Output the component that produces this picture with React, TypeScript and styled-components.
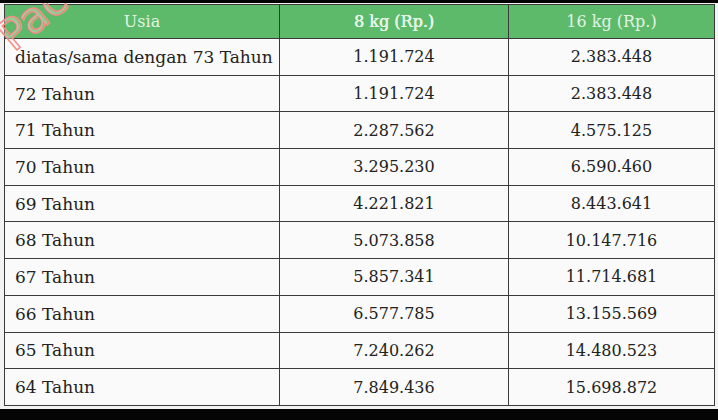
import React from "react";
import styled, { createGlobalStyle } from "styled-components";

const rows: [string, string, string][] = [
  ["diatas/sama dengan 73 Tahun", "1.191.724", "2.383.448"],
  ["72 Tahun", "1.191.724", "2.383.448"],
  ["71 Tahun", "2.287.562", "4.575.125"],
  ["70 Tahun", "3.295.230", "6.590.460"],
  ["69 Tahun", "4.221.821", "8.443.641"],
  ["68 Tahun", "5.073.858", "10.147.716"],
  ["67 Tahun", "5.857.341", "11.714.681"],
  ["66 Tahun", "6.577.785", "13.155.569"],
  ["65 Tahun", "7.240.262", "14.480.523"],
  ["64 Tahun", "7.849.436", "15.698.872"],
];

const GlobalStyle = createGlobalStyle`
  html, body {
    margin: 0;
    padding: 0;
    background: #f2f2f2;
  }
  body {
    font-family: "DejaVu Serif", "Liberation Serif", serif;
  }
`;

export default function App() {
  return (
    <>
      <GlobalStyle />
      <Screen>
        <BlackBar $height={3} />
        <Frame>
          <Watermark>Pac</Watermark>
          <Table>
            <colgroup>
              <col style={{ width: 275 }} />
              <col style={{ width: 229 }} />
              <col />
            </colgroup>
            <thead>
              <tr>
                <HeadCell>Usia</HeadCell>
                <HeadCell $strong>8 kg (Rp.)</HeadCell>
                <HeadCell>16 kg (Rp.)</HeadCell>
              </tr>
            </thead>
            <tbody>
              {rows.map(([age, a, b]) => (
                <tr key={age}>
                  <AgeCell>{age}</AgeCell>
                  <NumCell>{a}</NumCell>
                  <NumCell>{b}</NumCell>
                </tr>
              ))}
            </tbody>
          </Table>
        </Frame>
        <BlackBar $height={11} />
      </Screen>
    </>
  );
}

const Screen = styled.div`
  width: 718px;
  height: 420px;
  display: flex;
  flex-direction: column;
  overflow: hidden;
`;

const BlackBar = styled.div<{ $height: number }>`
  height: ${(p) => p.$height}px;
  flex: 0 0 auto;
  background: #050505;
`;

const Frame = styled.div`
  position: relative;
  flex: 1;
  padding: 1px 3px 3px 4px;
  background: #f3f3f3;
  overflow: hidden;
`;

const Table = styled.table`
  width: 711px;
  height: 402px;
  border-collapse: collapse;
  table-layout: fixed;
  background: #fafafa;
  border: 1.5px solid #3a3a3a;
`;

const HeadCell = styled.th<{ $strong?: boolean }>`
  height: 33px;
  padding: 0;
  background: #5dba6b;
  color: #e3f3e3;
  font-size: 16px;
  font-weight: 400;
  text-shadow: ${(p) => (p.$strong ? "0 0 0.6px #f0fff0, 0.4px 0 0 #e3f3e3" : "none")};
  text-align: center;
  border-left: 1.5px solid #3a3a3a;
  border-bottom: 1.5px solid #3a3a3a;
  &:first-child {
    border-left: none;
  }
`;

const AgeCell = styled.td`
  padding: 0 0 0 10px;
  color: #222;
  font-size: 17px;
  border: 1.5px solid #3a3a3a;
  white-space: nowrap;
`;

const NumCell = styled.td`
  padding: 0;
  color: #222;
  font-size: 16px;
  text-align: center;
  border: 1.5px solid #3a3a3a;
`;

const Watermark = styled.div`
  position: absolute;
  left: 13px;
  top: 17px;
  font-family: "DejaVu Sans", sans-serif;
  font-size: 43px;
  line-height: 36px;
  color: rgba(255, 240, 240, 0.35);
  -webkit-text-stroke: 1.5px #f28c86;
  transform: rotate(-40deg);
  transform-origin: 0 32px;
  pointer-events: none;
  z-index: 1;
`;
